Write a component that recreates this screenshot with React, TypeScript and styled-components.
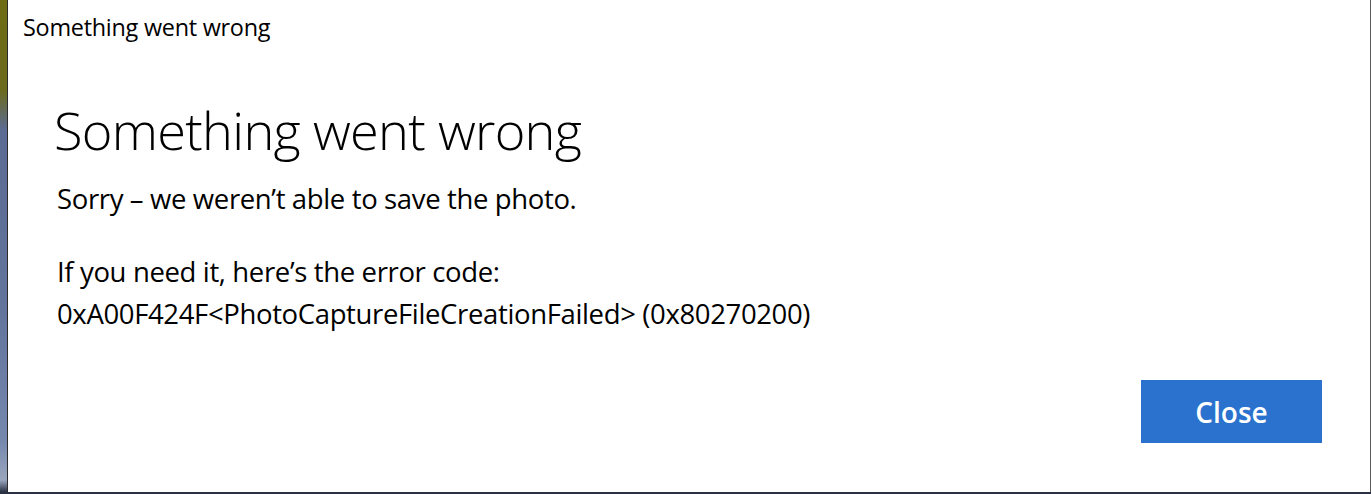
import React from "react";
import styled, { createGlobalStyle } from "styled-components";

const Global = createGlobalStyle`
  html, body { margin: 0; padding: 0; }
  body { background: #2a3142; overflow: hidden; }
`;

const Desktop = styled.div`
  width: 1371px;
  height: 494px;
  display: flex;
  align-items: flex-start;
  background: linear-gradient(
    to bottom,
    #6f6c14 0px,
    #6c6a1c 90px,
    #5b6b93 130px,
    #62739c 300px,
    #7487ad 440px,
    #9aa6be 480px,
    #2a3142 492px
  );
`;

const Dialog = styled.div`
  margin-left: 7px;
  width: 1362px;
  height: 492px;
  background: #ffffff;
  border-left: 1px solid #2b2b2b;
  border-right: 1px solid #5a5a5a;
  display: flex;
  flex-direction: column;
  font-family: "Open Sans", "Noto Sans", sans-serif;
  color: #000;
`;

const TitleBar = styled.div`
  height: 54px;
  padding-left: 15px;
  display: flex;
  align-items: center;
  font-size: 23.4px;
  letter-spacing: -0.25px;
  padding-bottom: 1px;
  box-sizing: border-box;
  white-space: nowrap;
`;

const Content = styled.div`
  display: flex;
  flex-direction: column;
  padding: 45px 48px 0 48px;
`;

const Heading = styled.h1`
  margin: 0 0 0 -2px;
  font-weight: 300;
  font-size: 52.3px;
  line-height: 62px;
  letter-spacing: -0.7px;
  white-space: nowrap;
`;

const Message = styled.p<{ $gap: number }>`
  margin: ${(p) => p.$gap}px 0 0 1px;
  font-size: 27.5px;
  line-height: 42px;
  font-weight: 400;
  letter-spacing: -0.36px;
  white-space: nowrap;
`;

const Footer = styled.div`
  margin-top: auto;
  display: flex;
  justify-content: flex-end;
  padding: 0 48px 49px 0;
`;

const Button = styled.button`
  width: 181px;
  height: 63px;
  border: none;
  background: #2a72ce;
  color: #fff;
  font-family: "Open Sans", "Noto Sans", sans-serif;
  font-weight: 600;
  font-size: 28px;
  padding: 1px 0 0 0;
  cursor: pointer;
`;

export default function App() {
  return (
    <>
      <Global />
      <Desktop>
        <Dialog>
          <TitleBar>Something went wrong</TitleBar>
          <Content>
            <Heading>Something went wrong</Heading>
            <Message $gap={17}>Sorry – we weren’t able to save the photo.</Message>
            <Message $gap={31}>
              If you need it, here’s the error code:
              <br />
              0xA00F424F&lt;PhotoCaptureFileCreationFailed&gt; (0x80270200)
            </Message>
          </Content>
          <Footer>
            <Button>Close</Button>
          </Footer>
        </Dialog>
      </Desktop>
    </>
  );
}
